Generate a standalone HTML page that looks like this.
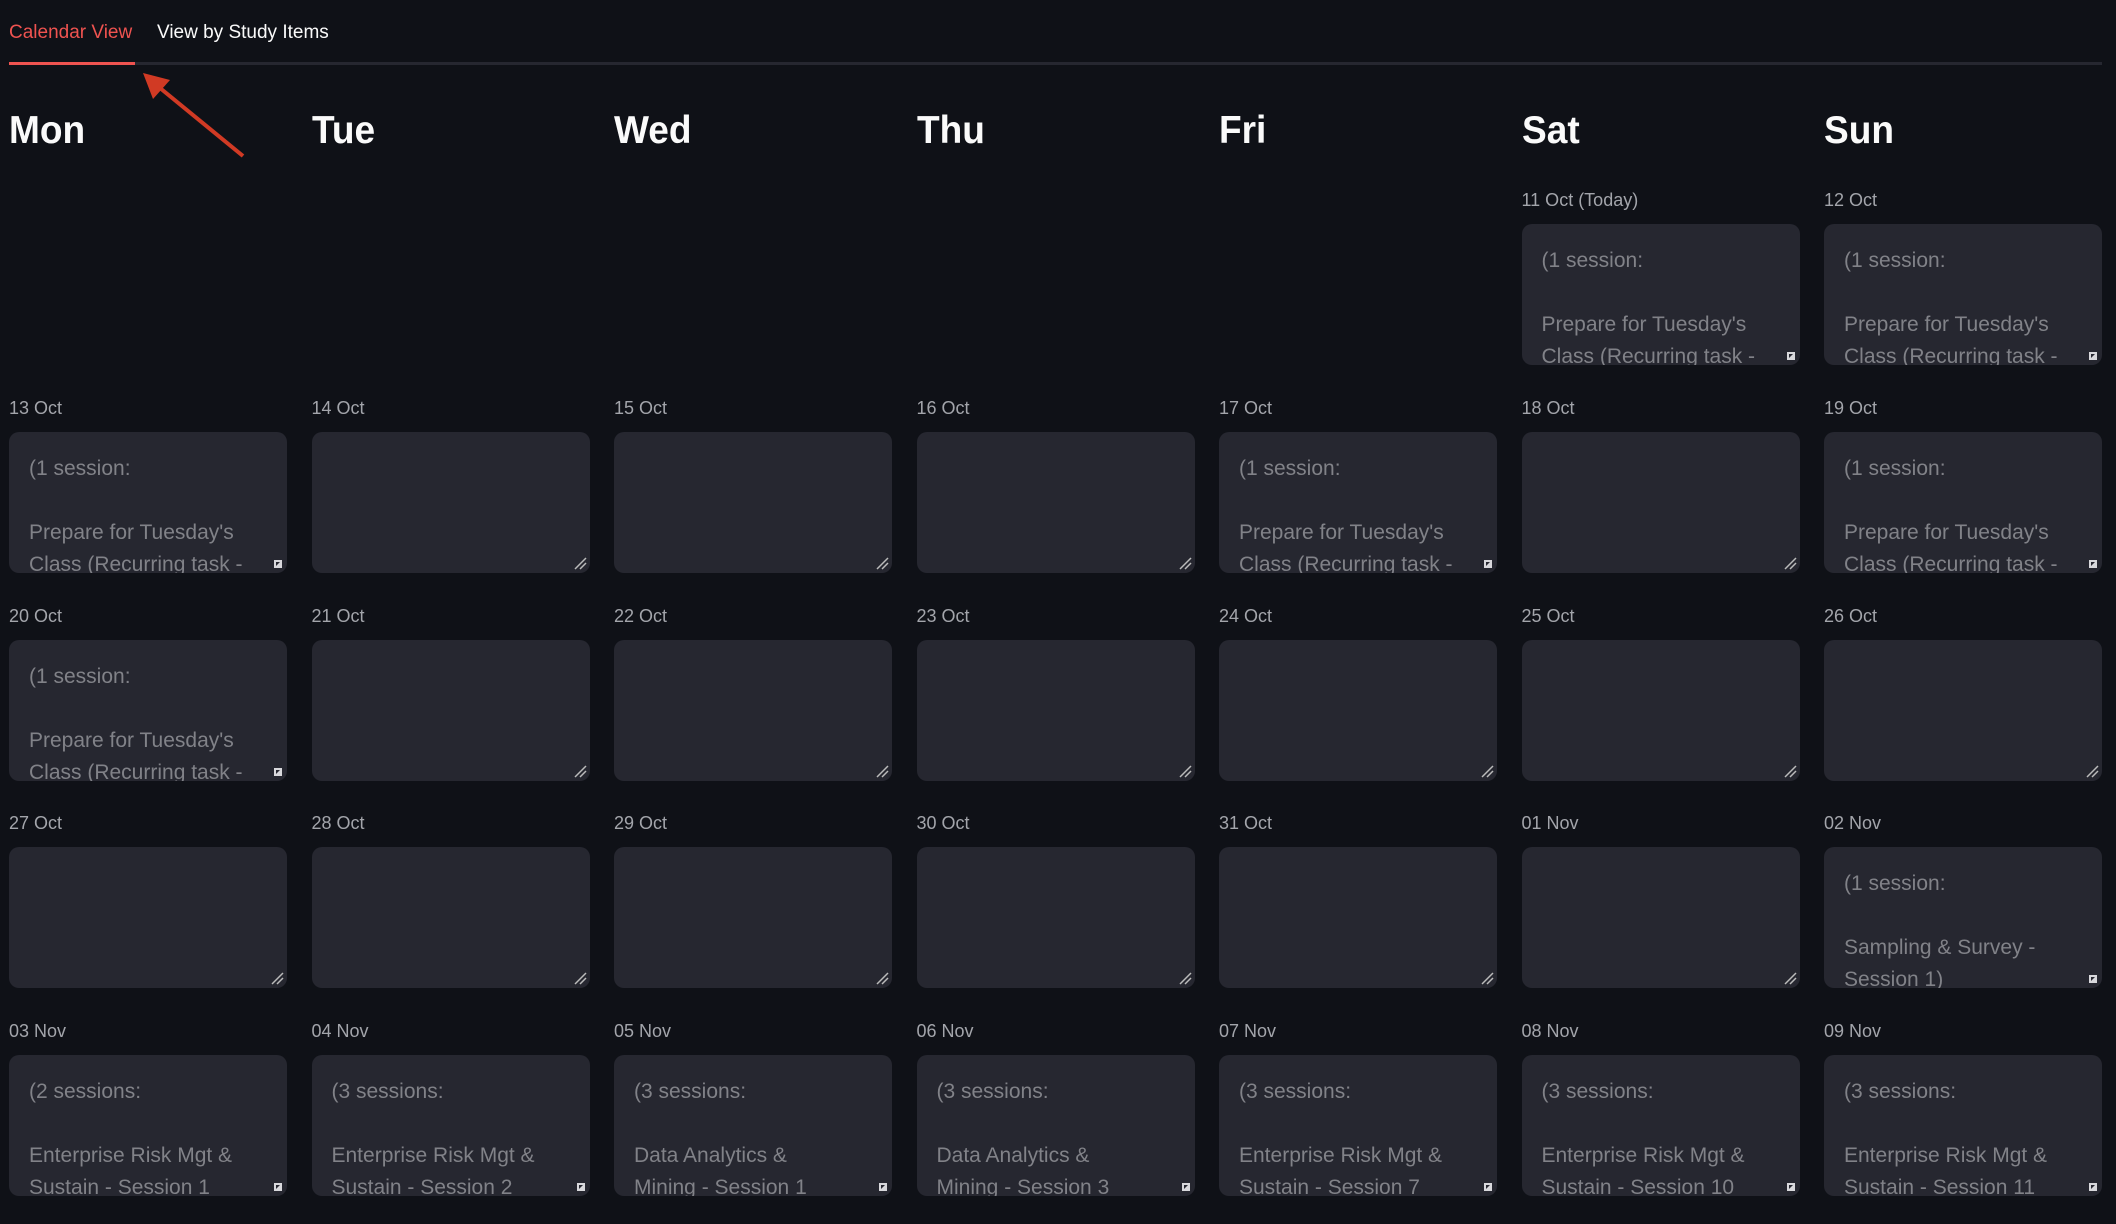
<!DOCTYPE html>
<html><head><meta charset="utf-8"><style>
html,body{margin:0;padding:0;background:#0f1117;width:2116px;height:1224px;overflow:hidden;font-family:"Liberation Sans",sans-serif;}
.abs{position:absolute;}
.tab{top:20px;font-size:19px;line-height:26px;white-space:nowrap;}
.day{top:108px;font-size:39px;font-weight:bold;color:#fafafa;transform:scaleX(.95);transform-origin:left;line-height:46px;}
.date{font-size:18px;color:#a3a5ab;line-height:22px;white-space:nowrap;}
.box{width:278px;height:141px;background:#262730;border-radius:10px;overflow:hidden;box-sizing:border-box;padding:21px 20px 0 20px;font-size:21px;line-height:32px;color:#818288;}
.box p{margin:0;white-space:nowrap;}
.grip{position:absolute;right:4px;bottom:4px;width:10px;height:10px;}
</style></head><body>
<div class="abs tab" style="left:9px;color:#ef5350;">Calendar View</div>
<div class="abs tab" style="left:157px;color:#fafafa;">View by Study Items</div>
<div class="abs" style="left:9px;top:62px;width:2093px;height:3px;background:#262730;"></div>
<div class="abs" style="left:9px;top:62px;width:126px;height:3px;background:#ef5350;"></div>
<svg class="abs" style="left:0;top:0" width="300" height="200"><line x1="243" y1="156" x2="160" y2="88" stroke="#d13a24" stroke-width="4"/><polygon points="143,73 170,80 153,99" fill="#d13a24"/></svg>
<div id="c"></div>
<script>
const days=["Mon","Tue","Wed","Thu","Fri","Sat","Sun"];
let h="";
const cx=i=>9+i*302.5;
days.forEach((d,i)=>h+=`<div class="abs day" style="left:${cx(i)}px">${d}</div>`);
const P=["(1 session:","","Prepare for Tuesday's","Class (Recurring task -"];
const S=(n,a,b)=>[`(${n} session${n>1?'s':''}:`,"",a,b];
const cells=[
[null,null,null,null,null,["11 Oct (Today)",P],["12 Oct",P]],
[["13 Oct",P],["14 Oct"],["15 Oct"],["16 Oct"],["17 Oct",P],["18 Oct"],["19 Oct",P]],
[["20 Oct",P],["21 Oct"],["22 Oct"],["23 Oct"],["24 Oct"],["25 Oct"],["26 Oct"]],
[["27 Oct"],["28 Oct"],["29 Oct"],["30 Oct"],["31 Oct"],["01 Nov"],["02 Nov",S(1,"Sampling & Survey -","Session 1)")]],
[["03 Nov",S(2,"Enterprise Risk Mgt &","Sustain - Session 1")],["04 Nov",S(3,"Enterprise Risk Mgt &","Sustain - Session 2")],["05 Nov",S(3,"Data Analytics &","Mining - Session 1")],["06 Nov",S(3,"Data Analytics &","Mining - Session 3")],["07 Nov",S(3,"Enterprise Risk Mgt &","Sustain - Session 7")],["08 Nov",S(3,"Enterprise Risk Mgt &","Sustain - Session 10")],["09 Nov",S(3,"Enterprise Risk Mgt &","Sustain - Session 11")]]
];
const gFull='<svg class="grip" viewBox="0 0 10 10"><polygon points="1,1 9,1 9,9 1,9" fill="#d8d8dc"/><polygon points="3,3 7,3 3,7" fill="#262730"/></svg>';
const gEmpty='<svg class="grip" style="width:14px;height:14px;right:3px;bottom:3px" viewBox="0 0 14 14"><line x1="2" y1="13" x2="13" y2="2" stroke="#bbb" stroke-width="1.5"/><line x1="7" y1="13" x2="13" y2="7" stroke="#bbb" stroke-width="1.5"/></svg>';
cells.forEach((row,r)=>row.forEach((c,i)=>{if(!c)return;const top=224+r*207.75;
h+=`<div class="abs date" style="left:${cx(i)}px;top:${top-35}px">${c[0]}</div>`;
h+=`<div class="abs box" style="left:${cx(i)}px;top:${top}px">${c[1]?c[1].map(t=>`<p>${t||'&nbsp;'}</p>`).join(''):''}${c[1]?gFull:gEmpty}</div>`;}));
document.getElementById("c").innerHTML=h;
</script>
</body></html>
